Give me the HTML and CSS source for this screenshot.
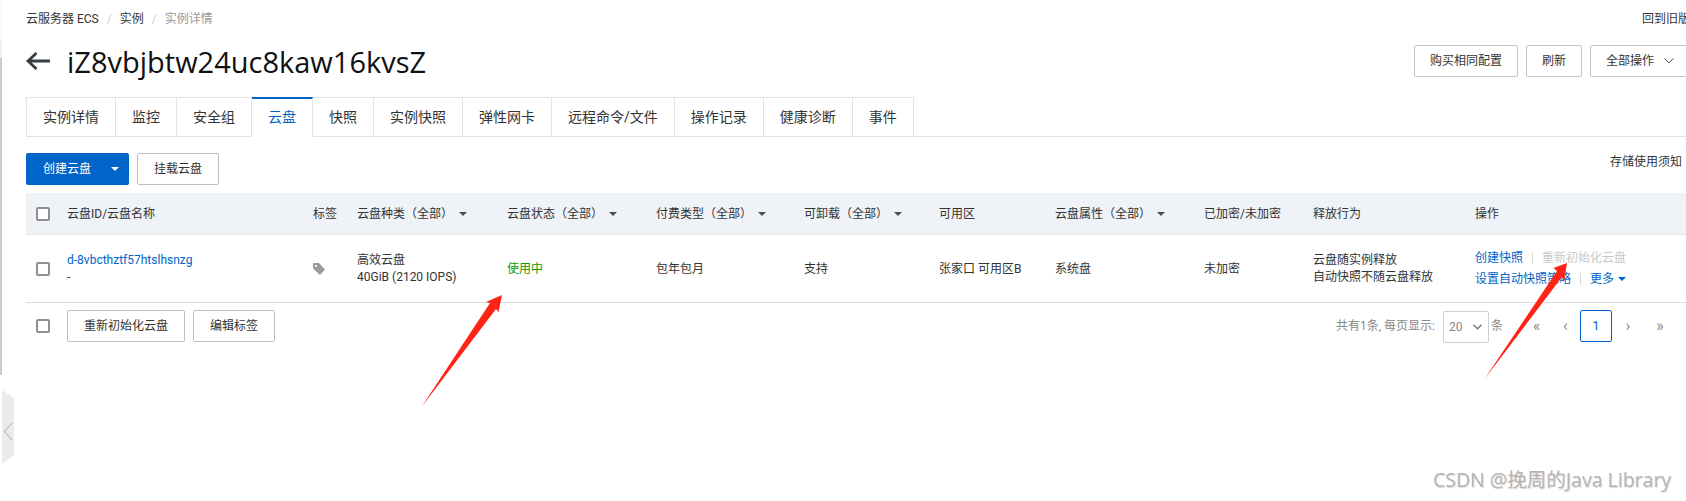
FILE: index.html
```html
<!DOCTYPE html>
<html lang="zh-CN">
<head>
<meta charset="utf-8">
<title>实例详情</title>
<link rel="stylesheet" href="styles.css">
</head>
<body>
<aside class="rail">
  <div class="rail-top"></div>
  <div class="rail-gap"></div>
  <div class="rail-bar"></div>
</aside>
<svg class="handle" width="14" height="76" viewBox="0 0 14 76"><polygon points="2,0 14,8 14,65 2,74" fill="#ebebeb"/><path d="M12 33 L4.500 41.500 L12 50" fill="none" stroke="#c4c4c4" stroke-width="1.200"/></svg>
<main class="page">
  <div class="crumb-row">
    <nav class="crumbs">
      <span>云服务器 ECS</span><i>/</i><span>实例</span><i>/</i><span class="cur">实例详情</span>
    </nav>
    <span>回到旧版</span>
  </div>
  <header class="title-row">
    <div class="title-left">
      <svg class="back" width="24" height="20" viewBox="0 0 24 20"><path d="M24 10 H2 M10.500 2 L2 10 L10.500 18" fill="none" stroke="#373d41" stroke-width="2.800"/></svg>
      <h1>iZ8vbjbtw24uc8kaw16kvsZ</h1>
    </div>
    <div class="actions">
      <button class="btn">购买相同配置</button>
      <button class="btn">刷新</button>
      <button class="btn btn-more">全部操作<svg width="10" height="6" viewBox="0 0 10 6"><path d="M.5 .5 L5 5 L9.500 .5" fill="none" stroke="#555" stroke-width="1"/></svg></button>
    </div>
  </header>
  <nav class="tabs">
    <a class="tab">实例详情</a><a class="tab">监控</a><a class="tab">安全组</a><a class="tab active">云盘</a><a class="tab">快照</a><a class="tab">实例快照</a><a class="tab">弹性网卡</a><a class="tab">远程命令/文件</a><a class="tab">操作记录</a><a class="tab">健康诊断</a><a class="tab">事件</a>
  </nav>
  <div class="toolbar">
    <div class="toolbar-left">
      <button class="btn-primary">创建云盘<span class="caret white"></span></button>
      <button class="btn btn-dark">挂载云盘</button>
    </div>
    <span class="notice">存储使用须知</span>
  </div>
  <section class="table">
    <div class="grid head">
      <span class="check"></span>
      <span>云盘ID/云盘名称</span>
      <span>标签</span>
      <span class="filter">云盘种类（全部）<span class="caret"></span></span>
      <span class="filter">云盘状态（全部）<span class="caret"></span></span>
      <span class="filter">付费类型（全部）<span class="caret"></span></span>
      <span class="filter">可卸载（全部）<span class="caret"></span></span>
      <span>可用区</span>
      <span class="filter">云盘属性（全部）<span class="caret"></span></span>
      <span>已加密/未加密</span>
      <span>释放行为</span>
      <span>操作</span>
    </div>
    <div class="grid row">
      <span class="check"></span>
      <div class="stack"><a class="link">d-8vbcthztf57htslhsnzg</a><span>-</span></div>
      <svg class="tag" width="12" height="12" viewBox="0 0 12 12"><path d="M0 1 Q0 0 1 0 H6 L12 6.500 L7 12 L0 5.500 Z M3 2 A1.100 1.100 0 1 0 3 4.200 A1.100 1.100 0 1 0 3 2 Z" fill="#9a9a9f" fill-rule="evenodd"/></svg>
      <div class="stack"><span>高效云盘</span><span>40GiB (2120 IOPS)</span></div>
      <span class="ok">使用中</span>
      <span>包年包月</span>
      <span>支持</span>
      <span>张家口 可用区B</span>
      <span>系统盘</span>
      <span>未加密</span>
      <div class="stack"><span>云盘随实例释放</span><span>自动快照不随云盘释放</span></div>
      <div class="ops">
        <div class="op-line"><a class="link">创建快照</a><i class="sep"></i><span class="off">重新初始化云盘</span></div>
        <div class="op-line"><a class="link">设置自动快照策略</a><i class="sep"></i><a class="link more">更多<span class="caret blue"></span></a></div>
      </div>
    </div>
    <div class="foot">
      <div class="foot-left">
        <span class="check"></span>
        <button class="btn btn-dark">重新初始化云盘</button>
        <button class="btn btn-dark">编辑标签</button>
      </div>
      <div class="pager">
        <span>共有1条, 每页显示:</span>
        <div class="size">20<svg width="9" height="6" viewBox="0 0 9 6"><path d="M.5 .8 L4.500 4.800 L8.500 .8" fill="none" stroke="#777" stroke-width="1.400"/></svg></div>
        <span class="unit">条</span>
        <span class="pg pg-sm">«</span><span class="pg pg-sm">‹</span><span class="pg now">1</span><span class="pg">›</span><span class="pg">»</span>
      </div>
    </div>
  </section>
</main>
<svg class="marks" width="1686" height="501" viewBox="0 0 1686 501">
  <polygon points="421.500,407 490,303 486,302 502,295 498.500,312 496,309" fill="#ff2315"/>
  <polygon points="1484.500,379 1557,271 1553.500,268 1567,263 1564,282 1562,277" fill="#ff2315"/>
</svg>
<div class="watermark">CSDN @挽周的Java Library</div>
</body>
</html>
```
FILE: styles.css
```css
* { box-sizing: border-box; }
html, body { margin: 0; width: 1686px; height: 501px; overflow: hidden; background: #fff; }
body { position: relative; font-family: Roboto, "Noto Sans CJK SC", sans-serif; font-size: 12px; line-height: 16px; color: #333; }
button { font: inherit; }
i { font-style: normal; }

.rail { position: absolute; left: 0; top: 0; width: 2px; display: flex; flex-direction: column; }
.rail-top { height: 41px; background: #f9f9f9; border-bottom: 1px solid #e4e4e4; }
.rail-gap { height: 17px; background: #f2f2f2; }
.rail-bar { height: 317px; background: #cbcbcb; }
.handle { position: absolute; left: 0; top: 390px; }

.page { width: 1690px; padding-left: 26px; }

.crumb-row { display: flex; justify-content: space-between; padding-top: 11px; height: 27px; }
.crumbs { display: flex; }
.crumbs i { color: #ccc; margin: 0 8px; }
.crumbs .cur { color: #999; }

.title-row { display: flex; justify-content: space-between; align-items: center; margin-top: 18px; height: 32px; }
.title-left { display: flex; align-items: center; gap: 17px; }
.back { display: block; }
h1 { margin: 0; padding-top: 1px; font-family: "Open Sans", "Noto Sans CJK SC", sans-serif; font-size: 29px; line-height: 32px; font-weight: 400; color: #111; }
.actions { display: flex; gap: 8px; }

.btn { height: 32px; padding: 0 15px; border: 1px solid #c0c6cc; border-radius: 2px; background: #fff; color: #333; display: inline-flex; align-items: center; }
.btn-dark { border-color: #bbbfc4; padding: 0 16px; }
.btn-more { gap: 10px; width: 100px; }

.tabs { display: flex; margin-top: 20px; height: 40px; border-bottom: 1px solid #e3e3e3; }
.tab { height: 40px; padding: 0 16px; border: 1px solid #e3e3e3; border-left-width: 0; font-size: 14px; line-height: 38px; color: #333; background: #fff; }
.tab:first-child { border-left-width: 1px; }
.tab.active { color: #0064c8; border-top: 2px solid #0064c8; border-bottom-color: #fff; line-height: 37px; }

.toolbar { display: flex; justify-content: space-between; margin-top: 16px; padding-right: 8px; height: 32px; }
.toolbar-left { display: flex; gap: 8px; }
.notice { margin-top: 1px; }
.btn-primary { width: 103px; height: 32px; padding: 0 0 0 17px; border: 0; border-radius: 2px; background: #0064c8; color: #fff; display: flex; align-items: center; gap: 20px; }

.caret { display: inline-block; width: 0; height: 0; border-style: solid; border-width: 4px 4px 0; border-color: #4d4d4d transparent transparent; }
.caret.white { border-top-color: #fff; }
.caret.blue { border-top-color: #0064c8; margin-left: 4px; }

.table { margin-top: 8px; }
.grid { display: grid; grid-template-columns: 41px 246px 44px 150px 149px 148px 135px 116px 149px 109px 162px 1fr; align-items: center; }
.grid > :first-child { margin-left: 10px; }
.head { height: 42px; background: #eff2f6; border-bottom: 1px solid #e3e6ea; }
.filter { display: flex; align-items: center; }
.filter .caret { margin-left: 6px; }
.row { height: 68px; border-bottom: 1px solid #dedede; }
.stack { display: flex; flex-direction: column; line-height: 17px; }
.link { color: #0064c8; text-decoration: none; }
.ok { color: #0a9a00; }
.off { color: #c8c8c8; }
.tag { display: block; }

.check { display: block; width: 14px; height: 14px; border: 2px solid #8e8e98; border-radius: 2px; background: #fff; }

.ops { line-height: 21px; }
.op-line { display: flex; align-items: center; height: 21px; }
.sep { display: block; width: 1px; height: 12px; background: #d9d9d9; margin: 0 9px; }
.more { display: inline-flex; align-items: center; }

.foot { display: flex; justify-content: space-between; align-items: flex-start; padding: 7px 14px 0 0; }
.foot-left { display: flex; align-items: center; gap: 8px; }
.foot-left .check { margin: 0 9px 0 10px; }
.pager { display: flex; align-items: center; color: #888; height: 32px; }
.size { width: 46px; height: 32px; margin: 2px 2px 0 8px; padding: 0 6px 0 5px; border: 1px solid #cfcfcf; border-radius: 2px; display: flex; align-items: center; justify-content: space-between; color: #888; }
.unit { margin-right: 19px; }
.pg { width: 32px; height: 32px; display: flex; align-items: center; justify-content: center; font-size: 16px; }
.pg-sm { width: 29px; }
.now { border: 1px solid #0064c8; border-radius: 2px; color: #0064c8; font-size: 13px; }

.marks { position: absolute; left: 0; top: 0; pointer-events: none; }
.watermark { position: absolute; left: 1433px; top: 467px; font-family: "Open Sans", "Noto Sans CJK SC", sans-serif; font-size: 19.500px; line-height: 26px; color: #b4b4b4; white-space: nowrap; text-shadow: 1px 1px 1px #ddd; }
```
